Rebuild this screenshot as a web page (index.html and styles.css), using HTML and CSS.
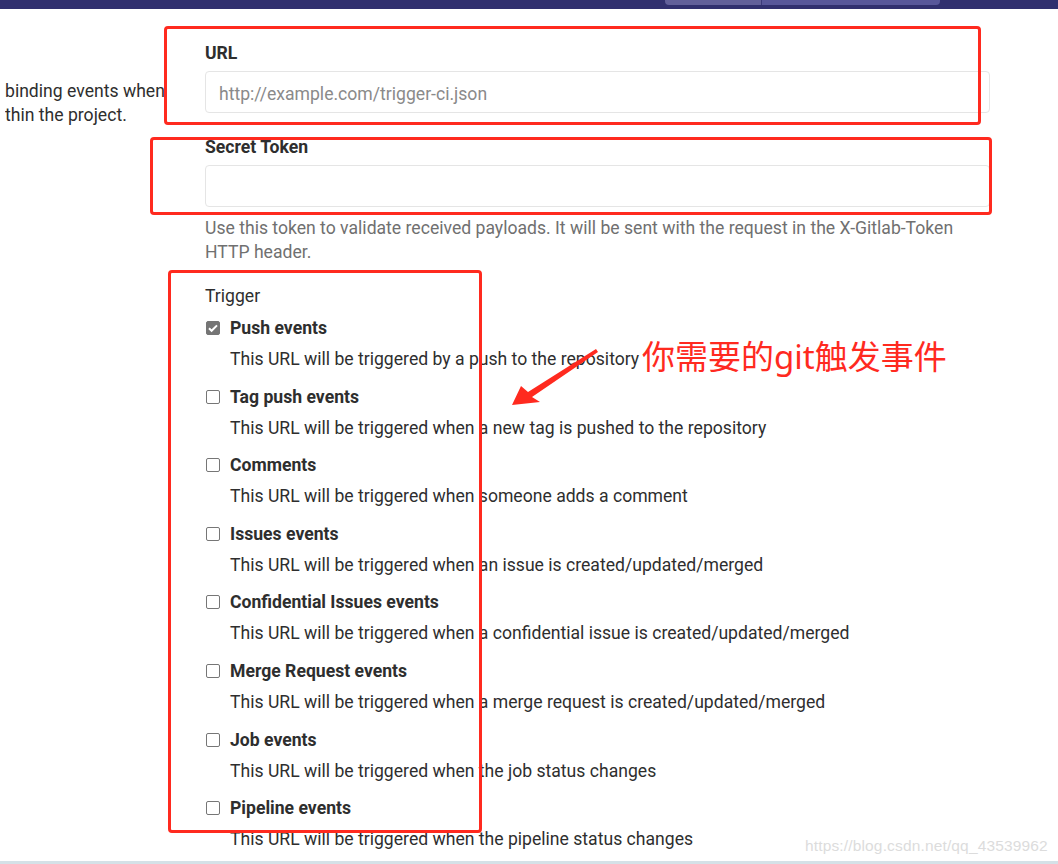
FILE: index.html
```html
<!DOCTYPE html>
<html lang="en">
<head>
    <meta charset="UTF-8">
    <meta name="viewport" content="width=device-width, initial-scale=1.0">
    <title>Webhooks</title>
    <link rel="stylesheet" href="styles.css">
</head>
<body>
    <div class="topbar">
        <div class="tabs">
            <span class="tab tab-left"></span>
            <span class="tab tab-right"></span>
        </div>
    </div>

    <div class="content">
        <div class="side">
            <p>binding events when<br>thin the project.</p>
        </div>

        <form class="main">
            <div class="form-group">
                <label class="label-bold" for="hook_url">URL</label>
                <input type="text" id="hook_url" class="form-control" placeholder="http://example.com/trigger-ci.json">
            </div>

            <div class="form-group">
                <label class="label-bold" for="hook_token">Secret Token</label>
                <input type="text" id="hook_token" class="form-control">
                <p class="form-text">Use this token to validate received payloads. It will be sent with the request in the X-Gitlab-Token HTTP header.</p>
            </div>

            <div class="form-group">
                <label class="label-plain">Trigger</label>
                <ul class="triggers">
                    <li>
                        <label class="check"><input type="checkbox" checked> Push events</label>
                        <p class="desc">This URL will be triggered by a push to the repository</p>
                    </li>
                    <li>
                        <label class="check"><input type="checkbox"> Tag push events</label>
                        <p class="desc">This URL will be triggered when a new tag is pushed to the repository</p>
                    </li>
                    <li>
                        <label class="check"><input type="checkbox"> Comments</label>
                        <p class="desc">This URL will be triggered when someone adds a comment</p>
                    </li>
                    <li>
                        <label class="check"><input type="checkbox"> Issues events</label>
                        <p class="desc">This URL will be triggered when an issue is created/updated/merged</p>
                    </li>
                    <li>
                        <label class="check"><input type="checkbox"> Confidential Issues events</label>
                        <p class="desc">This URL will be triggered when a confidential issue is created/updated/merged</p>
                    </li>
                    <li>
                        <label class="check"><input type="checkbox"> Merge Request events</label>
                        <p class="desc">This URL will be triggered when a merge request is created/updated/merged</p>
                    </li>
                    <li>
                        <label class="check"><input type="checkbox"> Job events</label>
                        <p class="desc">This URL will be triggered when the job status changes</p>
                    </li>
                    <li>
                        <label class="check"><input type="checkbox"> Pipeline events</label>
                        <p class="desc">This URL will be triggered when the pipeline status changes</p>
                    </li>
                </ul>
            </div>
        </form>
    </div>

    <div class="bottom-strip"></div>

    <!-- annotations drawn over the screenshot -->
    <div class="mark mark-url"></div>
    <div class="mark mark-token"></div>
    <div class="mark mark-trigger"></div>
    <svg class="arrow" width="1058" height="864" viewBox="0 0 1058 864">
        <polygon points="512,405 521,386 528,392 596,349 598,352 532,397 540,402" fill="#ff2a1f"/>
    </svg>
    <div class="note">你需要的git触发事件</div>
    <div class="watermark">https://blog.csdn.net/qq_43539962</div>
</body>
</html>
```

FILE: styles.css
```css
* {
    box-sizing: border-box;
}
body {
    margin: 0;
    width: 1058px;
    height: 864px;
    overflow: hidden;
    position: relative;
    background: #fff;
    color: #2e2e2e;
    font-family: "Segoe UI", Roboto, "Noto Sans", sans-serif;
    font-size: 17.6px;
    line-height: 24px;
}
.topbar {
    height: 9px;
    background: #31306f;
    display: flex;
}
.tabs {
    margin-left: 665px;
    display: flex;
    height: 5px;
}
.tab {
    display: block;
    height: 5px;
}
.tab-left {
    width: 97px;
    background: #62609a;
    border-bottom-left-radius: 4px;
    border-right: 1px solid #3b3a7a;
}
.tab-right {
    width: 178px;
    background: #58579a;
    border-bottom-right-radius: 4px;
}
.content {
    height: 852px;
    overflow: hidden;
    display: flex;
    padding-top: 32px;
}
.side {
    width: 205px;
    padding-left: 5px;
    flex-shrink: 0;
}
.side p {
    margin: 38px 0 0;
    width: 160px;
    white-space: nowrap;
    overflow: hidden;
}
.main {
    width: 785px;
}
.form-group {
    margin-bottom: 20px;
}
.form-group:first-child {
    margin-bottom: 22px;
}
.label-bold {
    display: block;
    font-weight: bold;
    margin-bottom: 6px;
}
.label-plain {
    display: block;
    margin-bottom: 8px;
}
.form-control {
    display: block;
    width: 100%;
    height: 42px;
    padding: 3px 13px 0;
    border: 1px solid #e5e5e5;
    border-radius: 4px;
    font-family: inherit;
    font-size: 17.6px;
    color: #2e2e2e;
}
.form-control::placeholder {
    color: #8a8a8a;
}
.form-text {
    margin: 9px 0 0;
    color: #707070;
    padding-right: 20px;
}
.triggers {
    list-style: none;
    margin: 0;
    padding: 0;
}
.triggers li {
    margin-bottom: 13.6px;
}
.check {
    display: flex;
    align-items: center;
    font-weight: bold;
    gap: 10px;
}
.check input {
    appearance: none;
    margin: 0 0 0 1px;
    width: 14px;
    height: 14px;
    border: 1px solid #767676;
    border-radius: 2px;
    background: #fff;
}
.check input:checked {
    background: #757575 url("data:image/svg+xml,%3Csvg xmlns='http://www.w3.org/2000/svg' viewBox='0 0 14 14'%3E%3Cpath d='M3 7.2l2.6 2.6L11 4.4' fill='none' stroke='%23fff' stroke-width='2'/%3E%3C/svg%3E") no-repeat center / 14px 14px;
    border-color: #757575;
}
.desc {
    margin: 7px 0 0 25px;
}
.bottom-strip {
    height: 3px;
    background: #d5e1e7;
}
.mark {
    position: absolute;
    border: 3px solid #ff2a1f;
    border-radius: 4px;
}
.mark-url {
    left: 164px;
    top: 26px;
    width: 817px;
    height: 99px;
}
.mark-token {
    left: 150px;
    top: 137px;
    width: 842px;
    height: 78px;
}
.mark-trigger {
    left: 168px;
    top: 270px;
    width: 314px;
    height: 563px;
}
.arrow {
    position: absolute;
    left: 0;
    top: 0;
}
.note {
    position: absolute;
    left: 642px;
    top: 336px;
    color: #ff2a1f;
    font-family: "Noto Sans", "Noto Sans CJK SC", sans-serif;
    font-size: 33px;
    line-height: 42px;
}
.watermark {
    position: absolute;
    left: 805px;
    top: 836px;
    color: #dcdcdc;
    font-family: "Liberation Sans", Arial, sans-serif;
    font-size: 15.5px;
    line-height: 20px;
    letter-spacing: 0.15px;
}
```
